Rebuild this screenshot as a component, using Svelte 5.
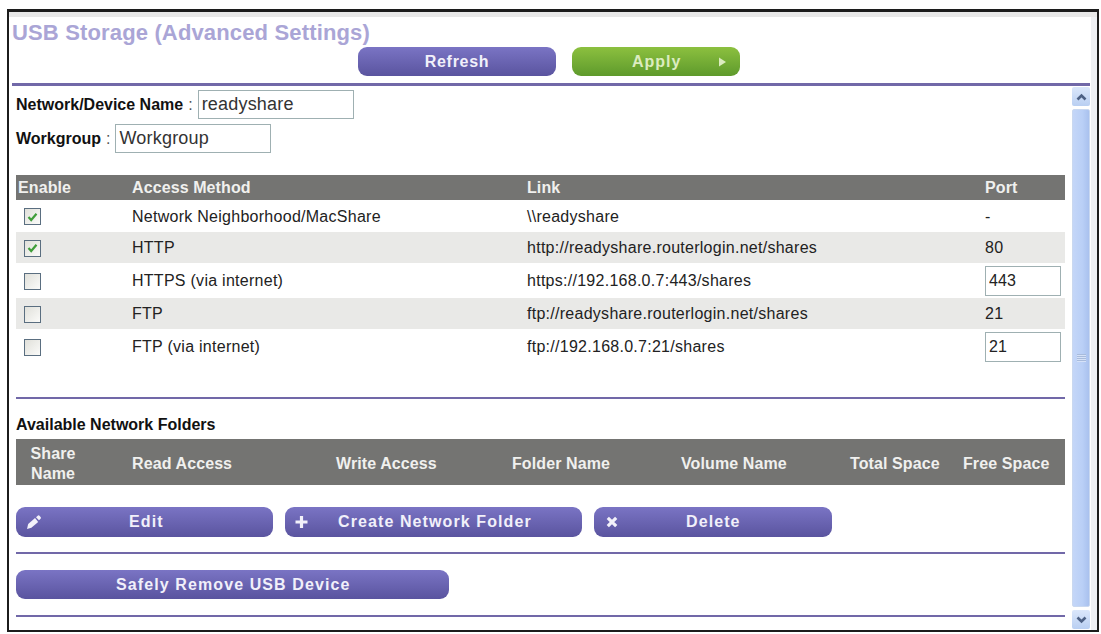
<script>
  const shares = [
    { on: true, method: 'Network Neighborhood/MacShare', link: '\\\\readyshare', port: '-', h: 32 },
    { on: true, method: 'HTTP', link: 'http://readyshare.routerlogin.net/shares', port: '80', h: 31 },
    { on: false, method: 'HTTPS (via internet)', link: 'https://192.168.0.7:443/shares', port: '443', edit: true, h: 35 },
    { on: false, method: 'FTP', link: 'ftp://readyshare.routerlogin.net/shares', port: '21', h: 31 },
    { on: false, method: 'FTP (via internet)', link: 'ftp://192.168.0.7:21/shares', port: '21', edit: true, h: 35 }
  ];
</script>

<div class="frame">
  <div class="head">
    <h1>USB Storage (Advanced Settings)</h1>
    <div class="head-btns">
      <button class="btn refresh">Refresh</button>
      <button class="btn apply">
        <span>Apply</span>
        <svg class="tri" width="9" height="10" viewBox="0 0 9 10"><path d="M1 0.5 L8 5 L1 9.5 Z" fill="#dcecc0" /></svg>
      </button>
    </div>
  </div>
  <div class="rule top-rule"></div>

  <div class="body">
    <div class="content">
      <div class="field name-field">
        <b>Network/Device Name</b> <span class="colon">:</span>
        <input value="readyshare" />
      </div>
      <div class="field group-field">
        <b>Workgroup</b> <span class="colon">:</span>
        <input value="Workgroup" />
      </div>

      <div class="grid shares head-row">
        <div class="first">Enable</div>
        <div>Access Method</div>
        <div>Link</div>
        <div>Port</div>
      </div>
      {#each shares as s, i}
        <div class="grid shares row" class:alt={i % 2 === 1} style="height: {s.h}px">
          <div class="check-cell">
            <span class="check">
              {#if s.on}
                <svg width="11" height="10" viewBox="0 0 11 10"><path d="M1.5 5 L4.2 8 L9.5 1.8" fill="none" stroke="#3f9e3a" stroke-width="2.2" /></svg>
              {/if}
            </span>
          </div>
          <div>{s.method}</div>
          <div>{s.link}</div>
          <div>
            {#if s.edit}
              <input class="port" value={s.port} />
            {:else}
              {s.port}
            {/if}
          </div>
        </div>
      {/each}

      <div class="rule first-rule"></div>
      <div class="sub">Available Network Folders</div>
      <div class="grid folders head-row">
        <div class="share-name">Share<br />Name</div>
        <div>Read Access</div>
        <div>Write Access</div>
        <div>Folder Name</div>
        <div>Volume Name</div>
        <div>Total Space</div>
        <div>Free Space</div>
      </div>

      <div class="actions">
        <button class="btn act edit">
          <svg class="ic" width="16" height="15" viewBox="0 0 16 15">
            <path d="M1 14.5 L2.2 9.5 L9 3.6 L12.2 7.4 L5.4 13.2 Z" fill="#f2f1fa" />
            <path d="M10 2.7 L12 1 Q12.8 0.5 13.5 1.2 L14.8 2.8 Q15.3 3.6 14.6 4.2 L13 5.8 Z" fill="#f2f1fa" />
          </svg>
          Edit
        </button>
        <button class="btn act create">
          <svg class="ic" width="13" height="13" viewBox="0 0 13 13"><path d="M6.5 0.5 V12.5 M0.5 6.5 H12.5" stroke="#f2f1fa" stroke-width="3.2" /></svg>
          Create Network Folder
        </button>
        <button class="btn act del">
          <svg class="ic" width="12" height="12" viewBox="0 0 12 12"><path d="M1.8 1.8 L10.2 10.2 M10.2 1.8 L1.8 10.2" stroke="#f2f1fa" stroke-width="3.2" /></svg>
          Delete
        </button>
      </div>
      <div class="rule mid-rule"></div>
      <button class="btn act safe">Safely Remove USB Device</button>
      <div class="rule last-rule"></div>
    </div>

    <div class="scroll">
      <div class="sb-btn">
        <svg width="11" height="8" viewBox="0 0 11 8"><path d="M1.5 6.5 L5.5 2.5 L9.5 6.5" fill="none" stroke="#4d6185" stroke-width="2.6" /></svg>
      </div>
      <div class="thumb"><span class="grip"></span></div>
      <div class="sb-btn">
        <svg width="11" height="8" viewBox="0 0 11 8"><path d="M1.5 1.5 L5.5 5.5 L9.5 1.5" fill="none" stroke="#4d6185" stroke-width="2.6" /></svg>
      </div>
    </div>
  </div>
</div>

<style>
  :global(body) {
    margin: 0;
    background: #fff;
  }
  .frame {
    box-sizing: border-box;
    width: 1092px;
    height: 623px;
    margin: 9px 0 0 7px;
    border: 2px solid #1c1c1c;
    border-top-width: 3px;
    box-shadow: inset 0 5px 0 #e8e8e8, inset -6px 0 0 #eef0f3;
    padding: 0 7px 0 3px;
    font-family: "Liberation Sans", Arial, sans-serif;
    font-size: 16px;
    letter-spacing: 0.27px;
    color: #222;
    overflow: hidden;
  }
  .head {
    height: 71px;
  }
  h1 {
    margin: 0;
    padding-top: 8px;
    font-size: 22px;
    line-height: 26px;
    font-weight: bold;
    color: #aaa5d6;
    letter-spacing: 0.15px;
  }
  .head-btns {
    display: flex;
    gap: 16px;
    margin: 1px 0 0 346px;
  }
  .btn {
    border: none;
    padding: 0;
    font-family: "Liberation Sans", Arial, sans-serif;
    font-weight: bold;
    color: #f1f0fa;
    background: linear-gradient(#7a74c4, #5a549f);
    border-radius: 9px;
    letter-spacing: 0.7px;
  }
  .refresh {
    width: 198px;
    height: 29px;
    font-size: 16px;
  }
  .apply {
    width: 168px;
    height: 29px;
    font-size: 16px;
    letter-spacing: 1px;
    background: linear-gradient(#8cc03f, #5e9a2c);
    color: #dcecc0;
    display: flex;
    align-items: center;
    padding-left: 60px;
    box-sizing: border-box;
  }
  .tri {
    margin-left: 37px;
  }
  .rule {
    height: 2px;
    background: #7168a8;
  }
  .top-rule {
    height: 3px;
  }
  .body {
    display: flex;
    justify-content: space-between;
  }
  .content {
    width: 1049px;
    margin-left: 4px;
  }
  .field {
    display: flex;
    align-items: center;
    gap: 5px;
    height: 29px;
    letter-spacing: 0;
  }
  .name-field {
    margin-top: 4px;
  }
  .group-field {
    margin-top: 5px;
  }
  .field b {
    color: #111;
  }
  .colon {
    color: #555;
  }
  input {
    box-sizing: border-box;
    border: 1px solid #9fb0b2;
    height: 29px;
    width: 156px;
    padding: 0 3px;
    font-family: "Liberation Sans", Arial, sans-serif;
    font-size: 18px;
    letter-spacing: 0.2px;
    color: #333;
    outline: none;
    background: #fff;
  }
  .grid {
    display: grid;
    align-items: center;
  }
  .shares {
    grid-template-columns: 116px 395px 458px 80px;
  }
  .folders {
    grid-template-columns: 116px 204px 176px 169px 169px 113px 102px;
  }
  .head-row {
    background: #747472;
    color: #f0f0ee;
    font-weight: bold;
    letter-spacing: 0.1px;
  }
  .shares.head-row {
    margin-top: 22px;
    height: 25px;
  }
  .first {
    padding-left: 2px;
  }
  .row {
    box-sizing: border-box;
    padding-top: 1px;
  }
  .row.alt {
    background: #e9e9e7;
  }
  .check-cell {
    padding-left: 8px;
  }
  .check {
    box-sizing: border-box;
    width: 17px;
    height: 17px;
    display: flex;
    align-items: center;
    justify-content: center;
    border: 1px solid #5a6e80;
    background: linear-gradient(135deg, #e0e0da, #fbfbf9);
  }
  .port {
    width: 76px;
    height: 30px;
    font-size: 16px;
    letter-spacing: 0.1px;
    color: #222;
  }
  .first-rule {
    margin-top: 33px;
  }
  .sub {
    font-weight: bold;
    letter-spacing: 0;
    color: #111;
    margin-top: 17px;
    line-height: 17px;
  }
  .folders.head-row {
    box-sizing: border-box;
    margin-top: 6px;
    height: 46px;
    padding-top: 3px;
    line-height: 20px;
  }
  .share-name {
    text-align: center;
    width: 74px;
  }
  .actions {
    display: flex;
    gap: 12px;
    margin-top: 22px;
  }
  .act {
    position: relative;
    height: 30px;
    font-size: 16px;
    letter-spacing: 1.1px;
    text-align: left;
    box-sizing: border-box;
  }
  .ic {
    position: absolute;
    top: 50%;
    transform: translateY(-50%);
  }
  .edit {
    width: 257px;
    padding-left: 113px;
  }
  .edit .ic {
    left: 10px;
  }
  .create {
    width: 297px;
    padding-left: 53px;
  }
  .create .ic {
    left: 10px;
  }
  .del {
    width: 238px;
    padding-left: 92px;
  }
  .del .ic {
    left: 12px;
  }
  .mid-rule {
    margin-top: 15px;
  }
  .safe {
    display: block;
    width: 433px;
    height: 29px;
    margin-top: 16px;
    padding-left: 100px;
  }
  .last-rule {
    margin-top: 16px;
  }
  .scroll {
    width: 18px;
    display: flex;
    flex-direction: column;
    gap: 3px;
    margin-top: 1px;
    height: 542px;
  }
  .sb-btn {
    height: 19px;
    flex: none;
    display: flex;
    align-items: center;
    justify-content: center;
    background: linear-gradient(#dbe7fb, #b9cff2);
    border-radius: 2px;
  }
  .thumb {
    flex: 1;
    display: flex;
    align-items: center;
    justify-content: center;
    background: linear-gradient(90deg, #c4d6f8, #b9cff6 60%, #a9c1ee);
    border: 1px solid #c9d8f0;
    border-radius: 2px;
  }
  .grip {
    width: 9px;
    height: 8px;
    background: repeating-linear-gradient(#a8bbdc 0 1px, #d6e2f8 1px 2px);
  }
</style>
